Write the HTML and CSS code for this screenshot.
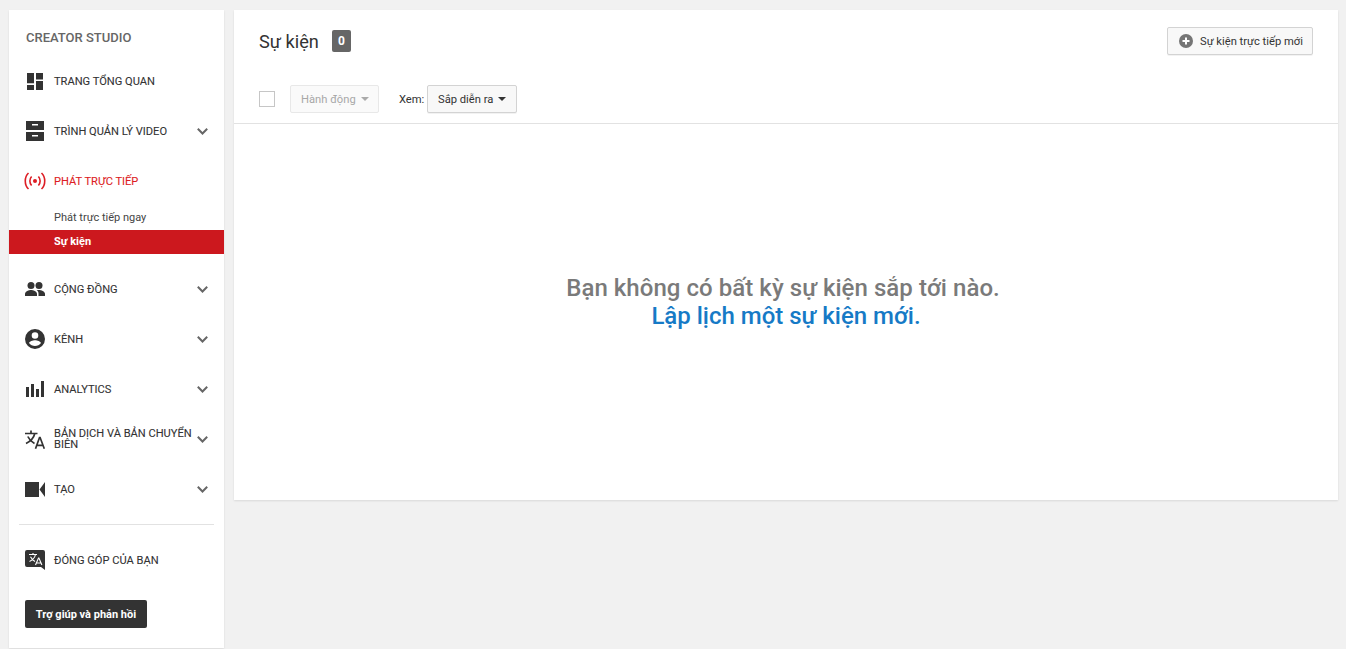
FILE: index.html
```html
<!DOCTYPE html>
<html lang="vi">
<head>
<meta charset="utf-8">
<title>Sự kiện</title>
<link rel="stylesheet" href="styles.css">
</head>
<body>
<div class="page">
  <aside class="sidebar">
    <div class="brand">CREATOR STUDIO</div>
    <nav class="nav">
      <div class="nav-row">
        <span class="nav-icon"><svg width="18" height="18" viewBox="0 0 18 18"><path fill="#333" d="M1 1h7v10.300H1zM1 13h7v5H1zM10 1h7v6.500h-7zM10 9h7v9h-7z"/></svg></span>
        <span class="nav-label">TRANG TỔNG QUAN</span>
      </div>
      <div class="nav-row">
        <span class="nav-icon"><svg width="18" height="20" viewBox="0 0 18 20"><path fill="#333" fill-rule="evenodd" d="M0 0h18v9H0zM6 3v1.500h6V3zM0 11h18v9H0zM6 14v1.500h6V14z"/></svg></span>
        <span class="nav-label">TRÌNH QUẢN LÝ VIDEO</span>
        <svg class="chev" width="11" height="7" viewBox="0 0 11 7"><path fill="none" stroke="#666" stroke-width="2" d="M.8.8 5.500 5.500 10.200.8"/></svg>
      </div>
      <div class="nav-row nav-row-active">
        <span class="nav-icon"><svg width="22" height="18" viewBox="0 0 22 18"><g fill="none" stroke="#dd1d24" stroke-width="1.600"><path d="M4.500 1C.2 5 .2 13 4.500 17"/><path d="M7.600 4.500C5.300 7 5.300 11 7.600 13.500"/><path d="M17.500 1c4.300 4 4.300 12 0 16"/><path d="M14.400 4.500c2.300 2.500 2.300 6.500 0 9"/></g><circle cx="11" cy="9" r="2" fill="#dd1d24"/></svg></span>
        <span class="nav-label">PHÁT TRỰC TIẾP</span>
      </div>
      <div class="sub-item">Phát trực tiếp ngay</div>
      <div class="sub-item sub-item-active">Sự kiện</div>
      <div class="nav-row nav-row-spaced">
        <span class="nav-icon"><svg width="20" height="14" viewBox="0 0 20 14"><g fill="#333"><circle cx="6" cy="3.500" r="3.500"/><circle cx="14" cy="3.500" r="3.500"/><path d="M0 14v-2.200C0 9.400 4 8 6 8s6 1.400 6 3.800V14z"/><path d="M13.500 14v-2.200c0-1.600-.7-2.800-1.800-3.700.8-.1 1.600-.1 2.300-.1 2 0 6 1.400 6 3.800V14z"/></g></svg></span>
        <span class="nav-label">CỘNG ĐỒNG</span>
        <svg class="chev" width="11" height="7" viewBox="0 0 11 7"><path fill="none" stroke="#666" stroke-width="2" d="M.8.8 5.500 5.500 10.200.8"/></svg>
      </div>
      <div class="nav-row">
        <span class="nav-icon"><svg width="20" height="20" viewBox="0 0 20 20"><path fill="#333" fill-rule="evenodd" d="M10 0a10 10 0 1 0 0 20 10 10 0 0 0 0-20zm0 3.200a3.300 3.300 0 1 1 0 6.600 3.300 3.300 0 0 1 0-6.600zM10 11.200c2.400 0 5.600 1.100 6 2.800a7.400 7.400 0 0 1-12 0c.4-1.700 3.600-2.800 6-2.800z"/></svg></span>
        <span class="nav-label">KÊNH</span>
        <svg class="chev" width="11" height="7" viewBox="0 0 11 7"><path fill="none" stroke="#666" stroke-width="2" d="M.8.8 5.500 5.500 10.200.8"/></svg>
      </div>
      <div class="nav-row">
        <span class="nav-icon"><svg width="18" height="16" viewBox="0 0 18 16"><path fill="#333" d="M0 6h3v10H0zM5 3h3v13H5zM10 8h3v8h-3zM15 0h3v16h-3z"/></svg></span>
        <span class="nav-label">ANALYTICS</span>
        <svg class="chev" width="11" height="7" viewBox="0 0 11 7"><path fill="none" stroke="#666" stroke-width="2" d="M.8.8 5.500 5.500 10.200.8"/></svg>
      </div>
      <div class="nav-row">
        <span class="nav-icon"><svg width="20" height="19" viewBox="0 0 20 19"><g fill="none" stroke="#333" stroke-width="1.700"><path d="M0 3.500h12.500M6 .5v3M9.800 3.500C8.800 8 5 11.500 1 13.500M2.800 6.500c1.400 3 4 5.500 6.700 7"/><path d="M10.500 18.700 14.500 7.500h.6l4.200 11.200M11.800 15.300h6"/></g></svg></span>
        <span class="nav-label">BẢN DỊCH VÀ BẢN CHUYỂN BIÊN</span>
        <svg class="chev" width="11" height="7" viewBox="0 0 11 7"><path fill="none" stroke="#666" stroke-width="2" d="M.8.8 5.500 5.500 10.200.8"/></svg>
      </div>
      <div class="nav-row">
        <span class="nav-icon"><svg width="20" height="15" viewBox="0 0 20 15"><path fill="#333" d="M0 0h14v15H0zM14.500 7.500 20 0v15z"/></svg></span>
        <span class="nav-label">TẠO</span>
        <svg class="chev" width="11" height="7" viewBox="0 0 11 7"><path fill="none" stroke="#666" stroke-width="2" d="M.8.8 5.500 5.500 10.200.8"/></svg>
      </div>
    </nav>
    <div class="divider"></div>
    <div class="nav-row">
      <span class="nav-icon"><svg width="20" height="20" viewBox="0 0 20 20"><path fill="#333" d="M2 0h16a2 2 0 0 1 2 2v18l-4-3H2a2 2 0 0 1-2-2V2a2 2 0 0 1 2-2z"/><g fill="none" stroke="#fff" stroke-width="1.100"><path d="M4 4.500h8M8 3v1.500M10.500 4.500C9.800 7.500 7.500 10 4.500 11.500M5.500 6.800c1 2 2.700 3.700 4.500 4.700"/><path d="M10.500 15 13.500 8h.4l3 7M11.500 13h4.500"/></g></svg></span>
      <span class="nav-label">ĐÓNG GÓP CỦA BẠN</span>
    </div>
    <button class="help-btn">Trợ giúp và phản hồi</button>
  </aside>

  <main class="content">
    <header class="content-head">
      <h1 class="title">Sự kiện</h1>
      <span class="count">0</span>
      <button class="btn btn-new">
        <svg width="14" height="14" viewBox="0 0 14 14"><circle cx="7" cy="7" r="7" fill="#757575"/><path stroke="#fff" stroke-width="2" d="M7 3.500v7M3.500 7h7"/></svg>
        Sự kiện trực tiếp mới
      </button>
    </header>
    <div class="toolbar">
      <span class="checkbox"></span>
      <button class="btn btn-disabled">Hành động<span class="caret caret-light"></span></button>
      <span class="view-label">Xem:</span>
      <button class="btn btn-view">Sắp diễn ra<span class="caret"></span></button>
    </div>
    <div class="empty">
      <div class="empty-text">Bạn không có bất kỳ sự kiện sắp tới nào.</div>
      <a class="empty-link" href="#">Lập lịch một sự kiện mới.</a>
    </div>
  </main>
</div>
</body>
</html>
```

FILE: styles.css
```css
* { box-sizing: border-box; }
html, body { margin: 0; height: 100%; }
body {
  background: #f1f1f1;
  font-family: Roboto, "Noto Sans", sans-serif;
  color: #333;
  overflow: hidden;
}
svg { flex: none; display: block; }
.page {
  display: flex;
  align-items: flex-start;
  gap: 10px;
  padding: 10px 8px 0 9px;
}
.sidebar {
  flex: 0 0 215px;
  height: 638px;
  background: #fff;
  box-shadow: 0 1px 2px rgba(0,0,0,.1);
}
.brand {
  height: 46px;
  padding: 20px 0 0 17px;
  font-size: 13px;
  line-height: 15px;
  font-weight: 500;
  color: #666;
}
.nav-row {
  display: flex;
  align-items: center;
  height: 50px;
  padding: 0 16px 0 16px;
  color: #333;
}
.nav-row-active { color: #dd1d24; }
.nav-row-spaced { margin-top: 10px; }
.nav-icon {
  flex: 0 0 20px;
  width: 20px;
  display: flex;
  justify-content: center;
  align-items: center;
  margin-right: 9px;
}
.nav-label {
  flex: 1;
  font-size: 11.100px;
  line-height: 11px;
  font-weight: 400;
  -webkit-text-stroke: .1px currentColor;
}
.chev { margin-left: -7px; }
.sub-item {
  height: 24px;
  padding-left: 45px;
  font-size: 11px;
  line-height: 23px;
  color: #444;
}
.sub-item-active {
  background: #cc181e;
  color: #fff;
  font-weight: 700;
}
.divider {
  height: 1px;
  margin: 10px 10px 10px 10px;
  background: #e2e2e2;
}
.help-btn {
  display: block;
  margin: 15px 0 0 16px;
  width: 122px;
  height: 28px;
  padding: 0;
  border: 0;
  border-radius: 2px;
  background: #333;
  color: #fff;
  font: 700 11px Roboto, sans-serif;
}
.content {
  flex: 1;
  height: 490px;
  background: #fff;
  box-shadow: 0 1px 2px rgba(0,0,0,.1);
}
.content-head {
  display: flex;
  align-items: center;
  height: 62px;
  padding: 0 25px;
}
.title {
  margin: 0;
  font-size: 18.200px;
  font-weight: 400;
  color: #333;
}
.count {
  width: 19px;
  height: 22px;
  margin-left: 13px;
  border-radius: 2px;
  background: #666;
  color: #fff;
  font-size: 12px;
  font-weight: 700;
  line-height: 22px;
  text-align: center;
}
.btn {
  display: inline-flex;
  align-items: center;
  height: 28px;
  padding: 0 10px;
  border: 1px solid #d3d3d3;
  border-radius: 2px;
  background: #f8f8f8;
  color: #333;
  font: 400 11.200px Roboto, sans-serif;
  white-space: nowrap;
  box-shadow: 0 1px 0 rgba(0,0,0,.05);
}
.btn-new {
  margin-left: auto;
  width: 146px;
  padding: 0 0 0 11px;
  gap: 7px;
}
.toolbar {
  display: flex;
  align-items: center;
  height: 52px;
  padding: 3px 0 0 25px;
  border-bottom: 1px solid #e2e2e2;
}
.checkbox {
  width: 16px;
  height: 16px;
  border: 1px solid #c6c6c6;
  background: #fff;
}
.btn-disabled {
  width: 89px;
  margin-left: 15px;
  color: #a8a8a8;
  background: #fafafa;
  border-color: #e8e8e8;
  box-shadow: none;
}
.view-label {
  margin: 0 3px 0 20px;
  font-size: 11.200px;
  width: 25px;
}
.btn-view { width: 90px; }
.caret {
  width: 0;
  height: 0;
  margin-left: 5px;
  border-left: 4px solid transparent;
  border-right: 4px solid transparent;
  border-top: 4px solid #333;
}
.caret-light { border-top-color: #aaa; }
.empty {
  padding-top: 150px;
  text-align: center;
  font-size: 24px;
  line-height: 28px;
  font-weight: 500;
}
.empty-text {
  color: #7a7a7a;
  letter-spacing: .05px;
  padding-right: 6px;
}
.empty-link { color: #167ac6; text-decoration: none; }
```
